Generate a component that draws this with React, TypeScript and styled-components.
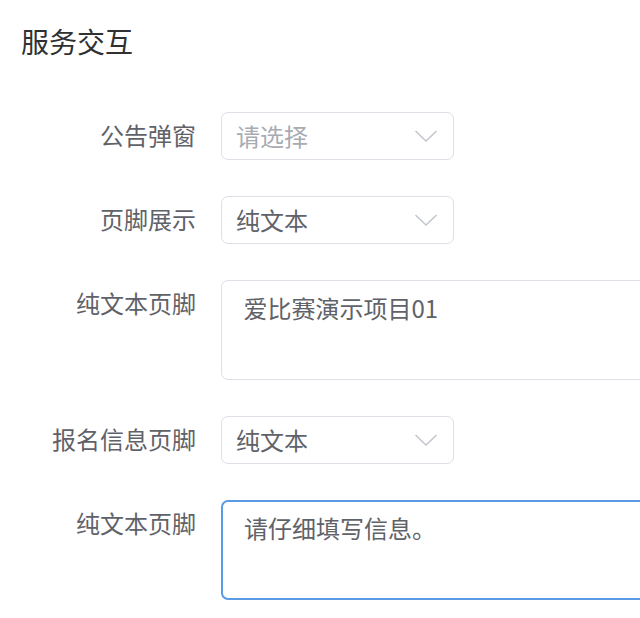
import React from "react";
import styled, { createGlobalStyle } from "styled-components";

const Global = createGlobalStyle`
  html, body { margin: 0; padding: 0; background: #fff; overflow: hidden; }
  body { font-family: "Noto Sans CJK SC", "Noto Sans", sans-serif; }
`;

const Page = styled.div`
  width: 640px;
  height: 618px;
  overflow: hidden;
  padding-top: 28px;
  box-sizing: border-box;
`;

const Title = styled.h2`
  margin: 0 0 57px 21px;
  font-size: 28px;
  line-height: 27px;
  font-weight: 400;
  color: #303133;
`;

const Form = styled.div`
  display: flex;
  flex-direction: column;
  gap: 36px;
`;

const Row = styled.div`
  display: flex;
  align-items: flex-start;
  gap: 25px;
`;

const Label = styled.div`
  width: 196px;
  flex: none;
  text-align: right;
  font-size: 24px;
  line-height: 46px;
  color: #5f6268;
`;

const Select = styled.div<{ $placeholder?: boolean }>`
  width: 233px;
  height: 48px;
  box-sizing: border-box;
  border: 1.5px solid #dcdfe6;
  border-radius: 7px;
  display: flex;
  align-items: center;
  justify-content: space-between;
  padding: 0 15px 1px 14px;
  font-size: 24px;
  color: ${(p) => (p.$placeholder ? "#a8abb2" : "#5f6268")};
`;

const ChevronBox = styled.span`
  display: flex;
  padding-top: 1px;
`;

const Chevron = () => (
  <ChevronBox>
    <svg width="24" height="14" viewBox="0 0 24 14" fill="none">
      <path d="M1.5 2 L12 12 L22.5 2" stroke="#c0c4cc" strokeWidth="1.4" />
    </svg>
  </ChevronBox>
);

const TextArea = styled.div<{ $focused?: boolean }>`
  width: 460px;
  height: 100px;
  flex: none;
  box-sizing: border-box;
  border: ${(p) => (p.$focused ? "2px solid #5b9be6" : "1.5px solid #dcdfe6")};
  border-radius: 7px;
  padding: ${(p) => (p.$focused ? "8px 21px" : "8.5px 21.5px")};
  font-size: 24px;
  line-height: 36px;
  color: #5f6268;
`;

export default function App() {
  return (
    <Page>
      <Global />
      <Title>服务交互</Title>
      <Form>
        <Row>
          <Label>公告弹窗</Label>
          <Select $placeholder>
            <span>请选择</span>
            <Chevron />
          </Select>
        </Row>
        <Row>
          <Label>页脚展示</Label>
          <Select>
            <span>纯文本</span>
            <Chevron />
          </Select>
        </Row>
        <Row>
          <Label>纯文本页脚</Label>
          <TextArea>爱比赛演示项目01</TextArea>
        </Row>
        <Row>
          <Label>报名信息页脚</Label>
          <Select>
            <span>纯文本</span>
            <Chevron />
          </Select>
        </Row>
        <Row>
          <Label>纯文本页脚</Label>
          <TextArea $focused>请仔细填写信息。</TextArea>
        </Row>
      </Form>
    </Page>
  );
}
